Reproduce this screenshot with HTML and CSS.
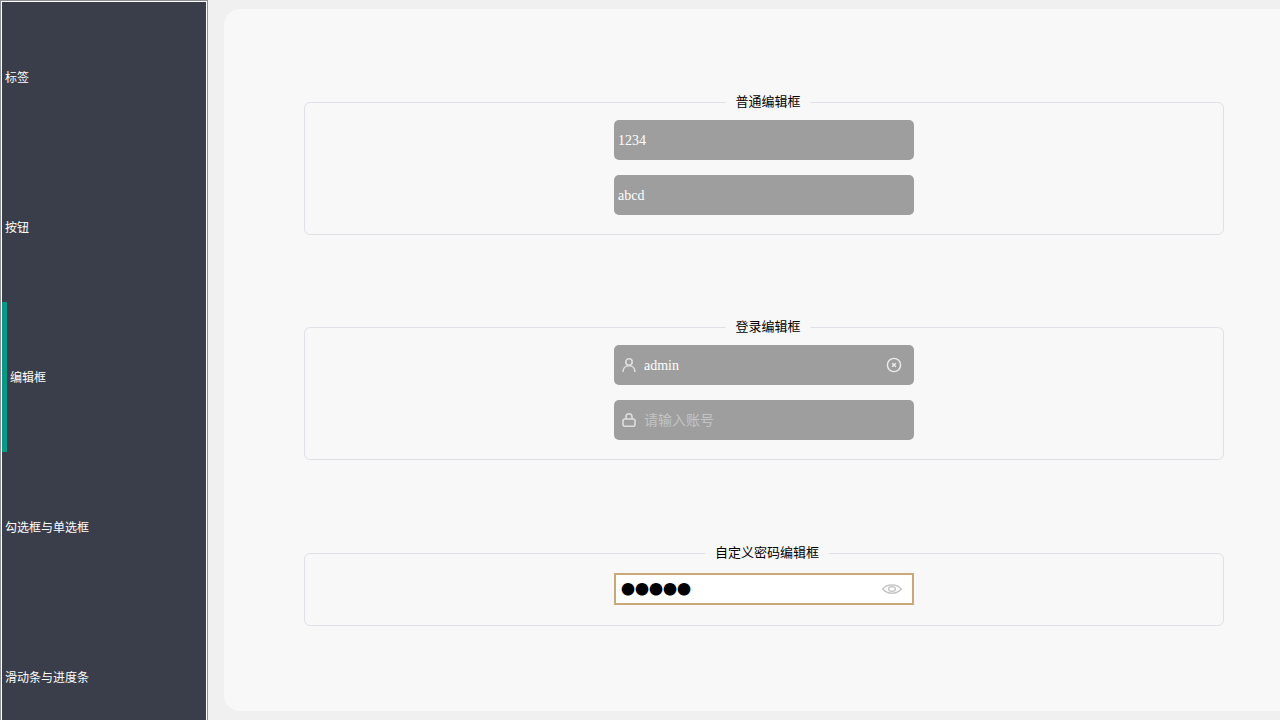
FILE: index.html
```html
<!DOCTYPE html>
<html lang="zh-CN">
<head>
<meta charset="utf-8">
<title>编辑框</title>
<link rel="stylesheet" href="styles.css">
</head>
<body>
<div class="page">
  <nav class="sidebar">
    <div class="sidebar-inner">
      <a class="nav-item"><span class="nav-label">标签</span></a>
      <a class="nav-item"><span class="nav-label">按钮</span></a>
      <a class="nav-item active"><span class="nav-label">编辑框</span></a>
      <a class="nav-item"><span class="nav-label">勾选框与单选框</span></a>
      <a class="nav-item"><span class="nav-label">滑动条与进度条</span></a>
    </div>
  </nav>
  <main class="card">
    <section class="group group-plain">
      <h2 class="legend">普通编辑框</h2>
      <div class="field"><input class="field-input" type="text" value="1234"></div>
      <div class="field"><input class="field-input" type="text" value="abcd"></div>
    </section>
    <section class="group group-login">
      <h2 class="legend">登录编辑框</h2>
      <div class="field">
        <svg class="icon" viewBox="0 0 14 14" fill="none" stroke="#dedede" stroke-width="1.6"><circle cx="7" cy="4" r="3.2"/><path d="M1 14c0-3.600 2.500-6.200 6-6.200s6 2.600 6 6.200"/></svg>
        <input class="field-input with-icon" type="text" value="admin">
        <svg class="icon-clear" viewBox="0 0 16 16" fill="none" stroke="#ececec"><circle cx="8" cy="8" r="6.600" stroke-width="1.400"/><path d="M6.200 6.200l3.600 3.600M9.800 6.200l-3.600 3.600" stroke-width="1.500"/></svg>
      </div>
      <div class="field">
        <svg class="icon" viewBox="0 0 14 14" fill="none" stroke="#dedede" stroke-width="1.6"><rect x="1" y="6" width="12" height="7.200" rx="2"/><path d="M4 6V3.800a3 3 0 0 1 6 0V6"/></svg>
        <input class="field-input with-icon" type="text" placeholder="请输入账号">
      </div>
    </section>
    <section class="group group-password">
      <h2 class="legend legend-wide">自定义密码编辑框</h2>
      <div class="password">
        <span class="dots">●●●●●</span>
        <svg class="icon-eye" viewBox="0 0 20 10" fill="none" stroke="#c0c0c0" stroke-width="1.200"><path d="M.6 5C3.200 2 6.400.8 10 .8S16.800 2 19.400 5C16.800 8 13.600 9.200 10 9.200S3.200 8 .6 5z"/><ellipse cx="10" cy="5" rx="3.500" ry="2.300"/></svg>
      </div>
    </section>
  </main>
</div>
</body>
</html>
```
FILE: styles.css
```css
* { box-sizing: border-box; }
html, body { margin: 0; height: 100%; overflow: hidden; }
body {
  background: #f0f0f0;
  font-family: "Liberation Sans", "Noto Sans CJK SC", sans-serif;
}
.page { display: flex; align-items: flex-start; width: 1280px; height: 720px; overflow: hidden; }
.sidebar { flex: none; width: 208px; border: 1px solid #8b8e96; border-bottom: 0; }
.sidebar-inner { border: 1px solid #fff; border-bottom: 0; background: #3a3e4a; }
.nav-item {
  display: flex;
  align-items: center;
  height: 150px;
  padding: 0 0 2px 3px;
  color: #fff;
  font-size: 12px;
}
.nav-item.active { border-left: 5px solid #069a86; }
.card {
  flex: none;
  width: 1080px;
  height: 702px;
  margin: 9px 0 0 16px;
  padding: 93px 0 0 80px;
  background: #f8f8f8;
  border-radius: 16px;
}
.group {
  position: relative;
  width: 920px;
  display: flex;
  flex-direction: column;
  align-items: center;
  gap: 15px;
  border: 1px solid #e0e0e6;
  border-radius: 6px;
}
.group-plain { padding: 17px 0 19px; height: 133px; margin-bottom: 92px; }
.group-login { padding: 17px 0 19px; height: 133px; margin-bottom: 93px; }
.group-password { padding: 19px 0 20px; height: 73px; }
.legend {
  position: absolute;
  top: -10px;
  left: 50%;
  margin: 0 0 0 4px;
  padding: 0 10px;
  transform: translateX(-50%);
  background: #f8f8f8;
  color: #000;
  font-size: 13px;
  font-weight: 400;
  line-height: 18px;
  white-space: nowrap;
}
.legend-wide { margin-left: 3px; }
.field {
  display: flex;
  align-items: center;
  flex: none;
  width: 300px;
  height: 40px;
  background: #9e9e9e;
  border-radius: 5px;
}
.field-input {
  flex: 1;
  min-width: 0;
  height: 100%;
  padding: 2px 4px 0;
  border: 0;
  outline: 0;
  background: transparent;
  color: #fff;
  font-family: "Liberation Serif", "Noto Sans CJK SC", serif;
  font-size: 14px;
}
.field-input.with-icon { padding-left: 8px; }
.field-input::placeholder {
  color: #c4c4c4;
  font-family: "Noto Sans CJK SC", sans-serif;
  font-size: 14px;
}
.icon { flex: none; width: 14px; height: 14px; margin-left: 8px; }
.icon-clear { flex: none; width: 16px; height: 16px; margin-right: 12px; }
.password {
  display: flex;
  align-items: center;
  justify-content: space-between;
  flex: none;
  width: 300px;
  height: 32px;
  padding: 0 10px 0 5px;
  background: #fff;
  border: 2px solid #c9a978;
}
.dots {
  margin-top: -2px;
  color: #000;
  font-family: "Noto Sans CJK SC", sans-serif;
  font-size: 14px;
  line-height: 1;
}
.icon-eye { flex: none; width: 20px; height: 10px; }
```
